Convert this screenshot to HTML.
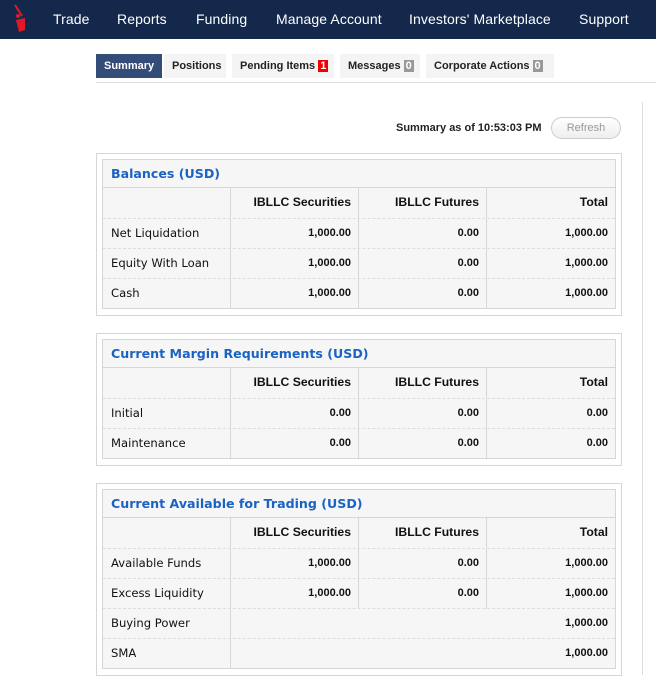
<!DOCTYPE html>
<html><head><style>
*{margin:0;padding:0;box-sizing:border-box}
body{width:656px;height:687px;background:#fff;font-family:"DejaVu Sans","Liberation Sans",sans-serif;position:relative;overflow:hidden}
.nav{position:absolute;left:0;top:0;width:656px;height:39px;background:#14284b}
.nav span{position:absolute;top:11px;color:#fff;font-size:14px;font-family:"Liberation Sans",sans-serif;letter-spacing:0.1px}
.tabs{position:absolute;top:54px;left:96px;height:24px}
.tab{position:absolute;top:0;height:24px;background:#f4f4f4;font:bold 11px "Liberation Sans",sans-serif;color:#222;line-height:24px;padding-left:8px}
.tab.act{background:#344d78;color:#fff}
.badge{display:inline-block;color:#fff;padding:0 2px;line-height:12px;margin-left:3px}
.uline{position:absolute;left:96px;top:82px;width:560px;height:1px;background:#ddd}
.vline{position:absolute;left:642px;top:102px;width:1px;height:573px;background:#ddd}
.ts{position:absolute;left:396px;top:122px;font:bold 11px "Liberation Sans",sans-serif;color:#222}
.btn{position:absolute;left:551px;top:117px;width:70px;height:22px;border:1px solid #ccc;border-radius:11px;background:linear-gradient(#fff,#eee);font:11px "Liberation Sans",sans-serif;color:#999;text-align:center;line-height:20px}
.sec{position:absolute;left:96px;width:526px;border:1px solid #d6d6d6}
.in{position:absolute;left:5px;top:5px;width:514px;border:1px solid #d6d6d6;background:#f6f6f6}
.title{height:28px;border-bottom:1px solid #d6d6d6;font-weight:bold;font-size:12.6px;color:#1a62c4;padding:6px 0 0 8px}
.row{height:30px;position:relative;border-top:1px dashed #ddd;font-size:11.6px;color:#111}
.row.h{border-top:none;font-weight:bold;font-family:"Liberation Sans",sans-serif}
.row div{position:absolute;top:0;height:30px;line-height:29px}
.l{left:0;width:128px;padding-left:8px;border-right:1px solid #d6d6d6}
.c1,.c2,.c3{text-align:right;padding-right:7px;font:bold 11px "Liberation Sans",sans-serif;line-height:29px}
.h .c1,.h .c2,.h .c3{font-size:12.2px}
.c1{left:128px;width:128px;border-right:1px solid #d6d6d6}
.c2{left:256px;width:128px;border-right:1px solid #d6d6d6}
.c3{left:384px;width:128px}
.cw{left:128px;width:384px;text-align:right;padding-right:7px;font:bold 11px "Liberation Sans",sans-serif}
</style></head><body>
<div class="nav">
<svg style="position:absolute;left:12px;top:4px" width="16" height="30" viewBox="0 0 16 30"><path d="M3 1 L10 12" stroke="#e0192a" stroke-width="2"/><circle cx="6" cy="12" r="2" fill="#e0192a"/><path d="M4 16 L13 14 L13 26 L7 28 Z" fill="#e0192a"/></svg>
<span style="left:53px">Trade</span><span style="left:117px">Reports</span><span style="left:196px">Funding</span><span style="left:276px">Manage Account</span><span style="left:409px">Investors' Marketplace</span><span style="left:579px">Support</span>
</div>
<div class="tabs">
<div class="tab act" style="left:0;width:66px">Summary</div>
<div class="tab" style="left:68px;width:62px">Positions</div>
<div class="tab" style="left:136px;width:102px">Pending Items<span class="badge" style="background:#e00">1</span></div>
<div class="tab" style="left:244px;width:80px">Messages<span class="badge" style="background:#999">0</span></div>
<div class="tab" style="left:330px;width:128px">Corporate Actions<span class="badge" style="background:#999">0</span></div>
</div>
<div class="uline"></div>
<div class="vline"></div>
<div class="ts">Summary as of 10:53:03 PM</div>
<div class="btn">Refresh</div>

<div class="sec" style="top:153px;height:163px"><div class="in">
<div class="title">Balances (USD)</div>
<div class="row h"><div class="l"></div><div class="c1">IBLLC Securities</div><div class="c2">IBLLC Futures</div><div class="c3">Total</div></div>
<div class="row"><div class="l">Net Liquidation</div><div class="c1">1,000.00</div><div class="c2">0.00</div><div class="c3">1,000.00</div></div>
<div class="row"><div class="l">Equity With Loan</div><div class="c1">1,000.00</div><div class="c2">0.00</div><div class="c3">1,000.00</div></div>
<div class="row"><div class="l">Cash</div><div class="c1">1,000.00</div><div class="c2">0.00</div><div class="c3">1,000.00</div></div>
</div></div>

<div class="sec" style="top:333px;height:133px"><div class="in">
<div class="title">Current Margin Requirements (USD)</div>
<div class="row h"><div class="l"></div><div class="c1">IBLLC Securities</div><div class="c2">IBLLC Futures</div><div class="c3">Total</div></div>
<div class="row"><div class="l">Initial</div><div class="c1">0.00</div><div class="c2">0.00</div><div class="c3">0.00</div></div>
<div class="row"><div class="l">Maintenance</div><div class="c1">0.00</div><div class="c2">0.00</div><div class="c3">0.00</div></div>
</div></div>

<div class="sec" style="top:483px;height:193px"><div class="in">
<div class="title">Current Available for Trading (USD)</div>
<div class="row h"><div class="l"></div><div class="c1">IBLLC Securities</div><div class="c2">IBLLC Futures</div><div class="c3">Total</div></div>
<div class="row"><div class="l">Available Funds</div><div class="c1">1,000.00</div><div class="c2">0.00</div><div class="c3">1,000.00</div></div>
<div class="row"><div class="l">Excess Liquidity</div><div class="c1">1,000.00</div><div class="c2">0.00</div><div class="c3">1,000.00</div></div>
<div class="row"><div class="l">Buying Power</div><div class="cw">1,000.00</div></div>
<div class="row"><div class="l">SMA</div><div class="cw">1,000.00</div></div>
</div></div>
</body></html>
